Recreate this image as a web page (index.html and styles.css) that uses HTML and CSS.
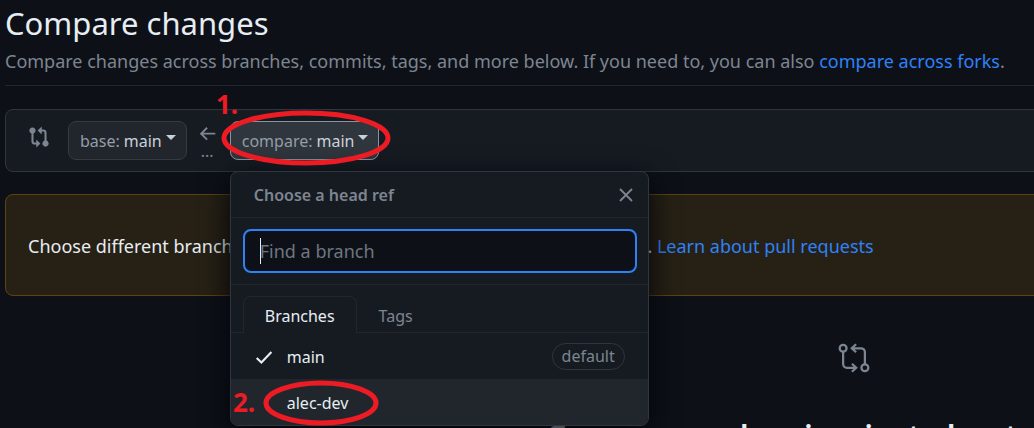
FILE: index.html
```html
<!DOCTYPE html>
<html lang="en">
<head>
<meta charset="utf-8">
<title>Compare changes</title>
<link rel="stylesheet" href="styles.css">
</head>
<body>
<main class="page">
  <header class="subhead">
    <h1 class="subhead-title">Compare changes</h1>
    <p class="subhead-text">Compare changes across branches, commits, tags, and more below. If you need to, you can also <a class="link" href="#forks">compare across forks</a>.</p>
  </header>

  <section class="range-editor">
    <svg class="icon-compare" viewBox="0 0 16 16" aria-hidden="true"><path d="M9.573.677L7.177 3.073a.25.25 0 000 .354l2.396 2.396A.25.25 0 0010 5.646V4h1a1 1 0 011 1v5.628a2.251 2.251 0 101.5 0V5A2.5 2.5 0 0011 2.5h-1V.854a.25.25 0 00-.427-.177zM6 12v-1.646a.25.25 0 01.427-.177l2.396 2.396a.25.25 0 010 .354l-2.396 2.396A.25.25 0 016 15.146V13.5H5A2.5 2.5 0 012.5 11V5.372a2.25 2.25 0 111.5 0V11a1 1 0 001 1h1zm6.75 0a.75.75 0 100 1.5.75.75 0 000-1.5zM4 3.25a.75.75 0 11-1.5 0 .75.75 0 011.5 0z"/></svg>
    <button class="ref-button" type="button"><span class="ref-label">base:</span> main<span class="caret"></span></button>
    <span class="direction">
      <svg class="icon-arrow" viewBox="0 0 16 16" aria-hidden="true"><path d="M14.5 7.7H2.2M7.2 2.4 1.9 7.7l5.3 5.3"/></svg>
      <span class="dots">...</span>
    </span>
    <div class="ref-picker">
      <button class="ref-button ref-button-open" type="button"><span class="ref-label">compare:</span> main<span class="caret"></span></button>
      <div class="menu">
        <div class="menu-header">
          <h2 class="menu-title">Choose a head ref</h2>
          <button class="menu-close" type="button" aria-label="Close"><svg class="icon-close" viewBox="0 0 16 16" aria-hidden="true"><path d="M2 2l12 12M14 2L2 14"/></svg></button>
        </div>
        <div class="menu-filter">
          <input class="filter-input" type="text" placeholder="Find a branch" aria-label="Find a branch">
          <span class="text-cursor"></span>
        </div>
        <div class="tabs">
          <button class="tab tab-active" type="button">Branches</button>
          <button class="tab" type="button">Tags</button>
        </div>
        <ul class="branches">
          <li><button class="branch" type="button"><svg class="icon-check" viewBox="0 0 16 16" aria-hidden="true"><path d="M1.5 8.8l4.2 4.1L14.6 3.6"/></svg><span class="branch-name">main</span><span class="badge">default</span></button></li>
          <li><button class="branch branch-hover" type="button"><span class="branch-name">alec-dev</span></button></li>
        </ul>
      </div>
    </div>
    <svg class="mark mark-compare" viewBox="0 0 170 56" aria-hidden="true"><ellipse cx="85" cy="28" rx="82" ry="25"/></svg>
    <svg class="mark mark-branch" viewBox="0 0 116 46" aria-hidden="true"><ellipse cx="58" cy="23" rx="55" ry="20"/></svg>
    <span class="step step-one">1.</span>
    <span class="step step-two">2.</span>
  </section>

  <section class="flash"><span>Choose different branches or forks above to discuss and review changes</span><span>. <a class="link" href="#learn">Learn about pull requests</a></span></section>

  <section class="blankslate">
    <svg class="icon-blank" viewBox="0 0 24 24" aria-hidden="true"><circle cx="4.75" cy="5.5" r="2.3"/><circle cx="19.25" cy="18.5" r="2.3"/><path d="M4.75 7.8V16a2.5 2.5 0 0 0 2.5 2.5h6M10.6 15.8l2.9 2.7-2.9 2.7M19.25 16.2V8a2.5 2.5 0 0 0-2.5-2.5h-6M13.4 2.8l-2.9 2.7 2.9 2.7"/></svg>
    <h3 class="blank-title">Compare and review just about anything</h3>
  </section>
</main>
</body>
</html>
```

FILE: styles.css
```css
* { box-sizing: border-box; }

body {
  margin: 0;
  height: 100vh;
  overflow: hidden;
  background: #0d1117;
  color: #e6edf3;
  font-family: "Noto Sans", "Open Sans", sans-serif;
  font-size: 18px;
  line-height: 26px;
}

button, input { font: inherit; color: inherit; }
h1, h2, h3, p, ul { margin: 0; padding: 0; }
svg { display: block; fill: none; stroke: #7d8590; }

.page { width: 165%; padding-left: 5px; }
.link { color: #2f81f7; text-decoration: none; }

.subhead {
  height: 86px;
  margin-bottom: 23px;
  border-bottom: 1px solid #21262d;
}
.subhead-title { font-size: 31px; font-weight: 400; line-height: 46px; }
.subhead-text { font-size: 18px; line-height: 30px; color: #7d8590; }

.range-editor {
  position: relative;
  display: flex;
  align-items: flex-start;
  padding: 11px 22px;
  background: #161b22;
  border: 1px solid #30363d;
  border-radius: 8px;
}
.icon-compare { width: 22px; height: 22px; margin: 5px 18px 0 0; fill: #7d8590; stroke: none; }

.ref-button {
  display: flex;
  align-items: center;
  gap: 4px;
  height: 39px;
  padding: 0 10px 0 11px;
  font-size: 16px;
  color: #c9d1d9;
  background: #21262d;
  border: 1px solid #363b42;
  border-radius: 8px;
  white-space: nowrap;
}
.ref-label { color: #959da6; }
.ref-button-open { background: #30363d; border-color: #8b949e; }
.caret {
  margin-bottom: 6px;
  border: 5px solid transparent;
  border-top-color: #c9d1d9;
  border-bottom: 0;
}

.direction { width: 43px; padding: 4px 0 0 12px; }
.icon-arrow { width: 18px; height: 18px; stroke-width: 1.7; }
.dots { display: block; padding-left: 2px; font-size: 16px; line-height: 16px; color: #7d8590; }

.ref-picker { position: relative; }
.menu {
  position: absolute;
  top: 50px;
  left: 0;
  z-index: 2;
  width: 419px;
  overflow: hidden;
  background: #161b22;
  border: 1px solid #30363d;
  border-radius: 8px;
  box-shadow: 0 8px 30px #010409;
}
.menu-header {
  display: flex;
  align-items: center;
  justify-content: space-between;
  height: 46px;
  padding: 0 14px 0 23px;
  border-bottom: 1px solid #21262d;
}
.menu-title { font-size: 16px; font-weight: 600; color: #7d8590; }
.menu-close { padding: 0; background: none; border: 0; }
.icon-close { width: 16px; height: 16px; stroke-width: 1.8; }

.menu-filter { position: relative; padding: 11px 11px 11px 12px; border-bottom: 1px solid #21262d; }
.filter-input {
  display: block;
  width: 100%;
  height: 44px;
  padding: 0 15px;
  font-size: 18px;
  background: #0d1117;
  border: 2px solid #2f81f7;
  border-radius: 8px;
  outline: 0;
}
.filter-input::placeholder { color: #6e7681; opacity: 1; }
.text-cursor { position: absolute; top: 20px; left: 29px; width: 1px; height: 26px; background: #e6edf3; }

.tabs { display: flex; padding: 11px 12px 0; box-shadow: inset 0 -1px #21262d; }
.tab {
  height: 37px;
  padding: 2px 21px 0;
  font-size: 16px;
  color: #7d8590;
  background: none;
  border: 1px solid transparent;
  border-bottom: 0;
  border-radius: 8px 8px 0 0;
}
.tab-active { color: #e6edf3; background: #161b22; border-color: #21262d; }

.branches { list-style: none; }
.branch {
  display: grid;
  grid-template-columns: 18px 1fr auto;
  align-items: center;
  column-gap: 14px;
  width: 100%;
  height: 46px;
  padding: 1px 23px 0 24px;
  font-size: 16px;
  text-align: left;
  background: none;
  border: 0;
}
.branch-hover { background: #21262d; }
.branch-name { grid-column: 2; }
.icon-check { width: 18px; height: 18px; stroke: #e6edf3; stroke-width: 1.9; }
.badge {
  padding: 0 9px;
  line-height: 25px;
  color: #7d8590;
  border: 1px solid #30363d;
  border-radius: 14px;
}

.flash {
  display: flex;
  gap: 10px;
  margin-top: 22px;
  padding: 38px 22px 36px;
  background: #272115;
  border: 1px solid #5f4411;
  border-radius: 8px;
}

.blankslate { display: flex; flex-direction: column; align-items: center; padding: 44px 4px 0 0; }
.icon-blank { width: 36px; height: 36px; stroke-width: 1.5; }
.blank-title { margin-top: 36px; font-size: 31px; font-weight: 600; line-height: 46px; white-space: nowrap; }

.mark { position: absolute; z-index: 3; stroke: #ed1c24; stroke-width: 5; }
.mark-compare { top: 0; left: 215px; width: 170px; }
.mark-branch { top: 270px; left: 257px; width: 116px; }
.step { position: absolute; z-index: 3; font-size: 26px; font-weight: 700; color: #ed1c24; }
.step-one { top: -19px; left: 210px; }
.step-two { top: 279px; left: 227px; }
```
